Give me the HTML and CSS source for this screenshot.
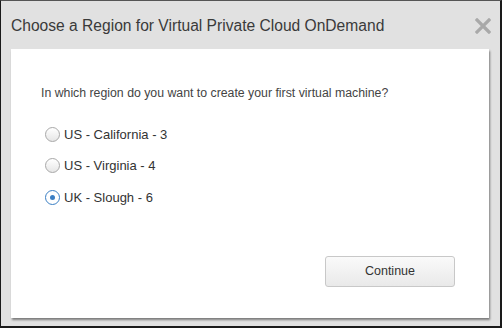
FILE: index.html
```html
<!DOCTYPE html>
<html lang="en">
<head>
    <meta charset="UTF-8">
    <title>Choose a Region</title>
    <link rel="stylesheet" href="styles.css">
</head>
<body>
    <div class="dialog">
        <div class="dialog-header">
            <h1>Choose a Region for Virtual Private Cloud OnDemand</h1>
            <svg class="close" width="16" height="16" viewBox="0 0 16 16">
                <path d="M2 2 L14 14 M14 2 L2 14" stroke="#a9a9a9" stroke-width="3.2" stroke-linecap="square"/>
            </svg>
        </div>
        <div class="dialog-body">
            <p class="question">In which region do you want to create your first virtual machine?</p>
            <ul class="regions">
                <li><span class="radio"></span>US - California - 3</li>
                <li><span class="radio"></span>US - Virginia - 4</li>
                <li><span class="radio checked"></span>UK - Slough - 6</li>
            </ul>
            <div class="actions">
                <button class="btn">Continue</button>
            </div>
        </div>
    </div>
</body>
</html>
```

FILE: styles.css
```css
body {
    margin: 0;
    font-family: "Liberation Sans", Arial, sans-serif;
}
.dialog {
    width: 502px;
    height: 328px;
    box-sizing: border-box;
    background-color: #e1e1e1;
    border: 1px solid #1a1a1a;
    border-top-color: #555;
    border-right-width: 2px;
    border-bottom-width: 2px;
    padding: 0 9px 0 10px;
}
.dialog-header {
    height: 48px;
    display: flex;
    align-items: center;
    justify-content: space-between;
    padding-top: 2px;
    box-sizing: border-box;
}
.dialog-header h1 {
    margin: 0;
    font-size: 15.6px;
    font-weight: normal;
    color: #3a3a3a;
}
.dialog-body {
    background-color: #fff;
    height: 269px;
    box-sizing: border-box;
    padding: 37px 30px 0 30px;
    box-shadow: 1px 2px 2px rgba(0, 0, 0, 0.45);
    margin-right: 2px;
}
.question {
    margin: 0;
    font-size: 12.3px;
    color: #444;
}
.regions {
    list-style: none;
    margin: 18.5px 0 0 0;
    padding: 0;
}
.regions li {
    display: flex;
    align-items: center;
    height: 31.5px;
    font-size: 13px;
    color: #333;
}
.radio {
    width: 13px;
    height: 13px;
    border: 1px solid #a8a8a8;
    border-radius: 50%;
    background: linear-gradient(#fff, #e6e6e6);
    margin: 0 4px 0 4px;
    display: flex;
    align-items: center;
    justify-content: center;
}
.radio.checked {
    border-color: #3b7fc4;
    background: #fff;
}
.radio.checked::after {
    content: "";
    width: 5px;
    height: 5px;
    border-radius: 50%;
    background-color: #3b7fc4;
}
.actions {
    display: flex;
    justify-content: flex-end;
    margin-top: 42.5px;
}
.btn {
    width: 130px;
    height: 31px;
    border: 1px solid #c8c8c8;
    border-radius: 3px;
    background: linear-gradient(#fafafa, #e9e9e9);
    font-family: "Liberation Sans", Arial, sans-serif;
    font-size: 12.5px;
    color: #333;
    margin-right: 4px;
}
```
